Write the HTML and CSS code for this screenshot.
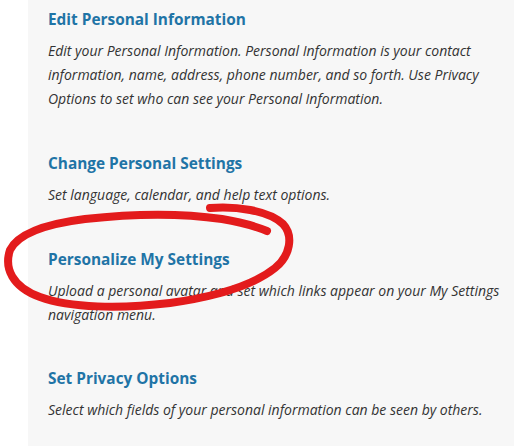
FILE: index.html
```html
<!DOCTYPE html>
<html>
<head>
<meta charset="utf-8">
<link rel="stylesheet" href="styles.css">
</head>
<body>
<div class="page">
  <div class="panel">
    <section class="item">
      <h2 class="title">Edit Personal Information</h2>
      <p class="desc">Edit your Personal Information. Personal Information is your contact information, name, address, phone number, and so forth. Use Privacy Options to set who can see your Personal Information.</p>
    </section>
    <section class="item">
      <h2 class="title">Change Personal Settings</h2>
      <p class="desc">Set language, calendar, and help text options.</p>
    </section>
    <section class="item">
      <h2 class="title">Personalize My Settings</h2>
      <p class="desc">Upload a personal avatar and set which links appear on your My Settings navigation menu.</p>
    </section>
    <section class="item item-last">
      <h2 class="title">Set Privacy Options</h2>
      <p class="desc">Select which fields of your personal information can be seen by others.</p>
    </section>
  </div>
  <svg class="scribble" width="514" height="446" viewBox="0 0 514 446">
    <path d="M210 208 C235 206 268 210 283 224 C294 236 290 256 275 268 C255 284 220 296 170 303 C120 309 70 308 40 297 C12 287 4 268 10 250 C18 234 45 224 85 219 C130 214 180 213 222 219 C240 222 255 226 267 231" fill="none" stroke="#e31b1c" stroke-width="8" stroke-linecap="round" stroke-linejoin="round"/>
  </svg>
</div>
</body>
</html>
```
FILE: styles.css
```css
html, body {
  margin: 0;
  padding: 0;
  background: #ffffff;
}
.page {
  position: relative;
  width: 514px;
  height: 446px;
  overflow: hidden;
  padding-left: 28px;
  box-sizing: border-box;
}
.panel {
  background: #f7f7f7;
  height: 446px;
  padding: 8px 8px 0 20px;
  box-sizing: border-box;
  display: flex;
  flex-direction: column;
  gap: 41px;
  font-family: "Open Sans", "Noto Sans", sans-serif;
}
.item {
  display: flex;
  flex-direction: column;
  gap: 7px;
}
.item-last {
  margin-top: -1px;
}
.title {
  margin: 0;
  font-size: 15.4px;
  font-weight: 700;
  line-height: 24px;
  color: #1f74a6;
}
.desc {
  margin: 0;
  font-size: 14px;
  font-style: italic;
  line-height: 24px;
  color: #333333;
}
.scribble {
  position: absolute;
  left: 0;
  top: 0;
  pointer-events: none;
}
```
